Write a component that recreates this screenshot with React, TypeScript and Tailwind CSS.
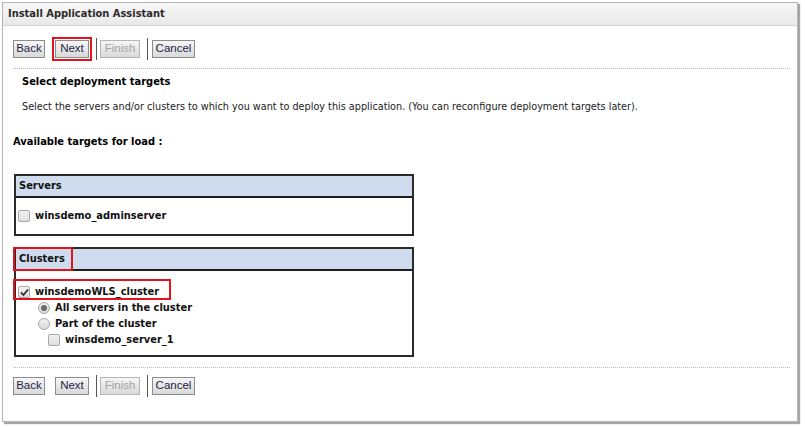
import React from "react";

const font = "font-['DejaVu_Sans_Condensed','DejaVu_Sans',sans-serif]";

function Btn({
  label,
  width,
  disabled,
  marked,
}: {
  label: string;
  width: string;
  disabled?: boolean;
  marked?: boolean;
}) {
  return (
    <div
      className={`${width} h-[18px] flex items-center justify-center border border-[#8c8c8c] bg-gradient-to-b from-[#f6f6f6] to-[#d9d9d9] text-[11.5px] font-['Liberation_Sans',Arial,sans-serif] ${
        disabled ? "text-[#a3a3a3] border-[#b5b5b5]" : "text-[#1e1e46]"
      } ${marked ? "outline-2 outline-[#e3131b] outline-offset-[1px]" : ""}`}
    >
      {label}
    </div>
  );
}

function ButtonBar({ marked }: { marked?: boolean }) {
  return (
    <div className="flex items-center h-[22px]">
      <Btn label="Back" width="w-[32px]" />
      <div className="ml-[10px]">
        <Btn label="Next" width="w-[34px]" marked={marked} />
      </div>
      <div className="ml-[7px] w-px h-[22px] bg-[#555]" />
      <div className="ml-[3px]">
        <Btn label="Finish" width="w-[40px]" disabled />
      </div>
      <div className="ml-[7px] w-px h-[22px] bg-[#555]" />
      <div className="ml-[4px]">
        <Btn label="Cancel" width="w-[43px]" />
      </div>
    </div>
  );
}

function Checkbox({ checked }: { checked?: boolean }) {
  return (
    <div className="w-[12px] h-[12px] rounded-[2px] border border-[#a8a8a8] bg-gradient-to-b from-[#f2f2f2] to-[#dedede] flex items-center justify-center">
      {checked && (
        <svg width="9" height="9" viewBox="0 0 9 9">
          <path d="M1 4.5 L3.5 7 L8 1.5" stroke="#333" strokeWidth="1.8" fill="none" />
        </svg>
      )}
    </div>
  );
}

function Radio({ checked }: { checked?: boolean }) {
  return (
    <div className="w-[12px] h-[12px] rounded-full border border-[#a8a8a8] bg-gradient-to-b from-[#f2f2f2] to-[#d8d8d8] flex items-center justify-center">
      {checked && <div className="w-[6px] h-[6px] rounded-full bg-[#6a6a6a]" />}
    </div>
  );
}

export default function App() {
  return (
    <div className={`w-[805px] h-[427px] bg-white pl-[2px] pt-[2px] ${font}`}>
      <div className="w-[796px] h-[420px] border border-[#b4b4b4] shadow-[2px_2px_1px_rgba(0,0,0,0.35)] flex flex-col">
        <div className="h-[23px] flex items-center px-[5px] bg-gradient-to-b from-[#f7f7f7] to-[#e9e9e9] border-b border-[#d2d2d2] text-[11px] font-bold text-[#2b2b2b]">
          Install Application Assistant
        </div>

        <div className="pl-[10px] pr-[7px] relative">
          <div className="mt-[12px]">
            <ButtonBar marked />
          </div>
          <div className="mt-[8px] border-t border-dotted border-[#b8b8b8]" />

          <div className="pl-[9px]">
            <div className="mt-[5px] h-[16px] flex items-center text-[11px] font-bold text-black">
              Select deployment targets
            </div>
            <div className="mt-[9px] h-[16px] flex items-center text-[10.75px] text-[#222]">
              Select the servers and/or clusters to which you want to deploy this application. (You can reconfigure
              deployment targets later).
            </div>
          </div>

          <div className="mt-[19px] h-[16px] flex items-center text-[11px] font-bold text-black">
            Available targets for load :
          </div>

          {/* Servers */}
          <div className="mt-[24px] ml-px w-[400px] border-2 border-[#2a2a2a]">
            <div className="h-[22px] bg-[#cfdcee] border-b-2 border-[#1e1e1e] flex items-center pl-[3px] text-[11px] font-bold text-[#111]">
              Servers
            </div>
            <div className="h-[36px] flex items-center pl-[2px] gap-[5px] text-[11px] font-bold text-[#111]">
              <Checkbox />
              <span>winsdemo_adminserver</span>
            </div>
          </div>

          {/* Clusters */}
          <div className="mt-[11px] ml-px w-[400px] border-2 border-[#2a2a2a] relative">
            <div className="h-[22px] bg-[#cfdcee] border-b-2 border-[#1e1e1e] flex items-center pl-[3px] text-[11px] font-bold text-[#111]">
              Clusters
            </div>
            <div className="h-[84px] pl-[2px] pt-[13px] text-[11px] font-bold text-[#111]">
              <div className="h-[16px] flex items-center gap-[5px]">
                <Checkbox checked />
                <span>winsdemoWLS_cluster</span>
              </div>
              <div className="h-[16px] flex items-center gap-[5px] pl-[20px]">
                <Radio checked />
                <span>All servers in the cluster</span>
              </div>
              <div className="h-[16px] flex items-center gap-[5px] pl-[20px]">
                <Radio />
                <span>Part of the cluster</span>
              </div>
              <div className="h-[16px] flex items-center gap-[5px] pl-[30px]">
                <Checkbox />
                <span>winsdemo_server_1</span>
              </div>
            </div>
            <div className="absolute left-[-3px] top-[-2px] w-[60px] h-[24px] border-2 border-[#e3131b]" />
            <div className="absolute left-[-3px] top-[30px] w-[158px] h-[21px] border-2 border-[#e3131b]" />
          </div>

          <div className="mt-[10px] border-t border-dotted border-[#b8b8b8]" />
          <div className="mt-[7px]">
            <ButtonBar />
          </div>
        </div>
      </div>
    </div>
  );
}
